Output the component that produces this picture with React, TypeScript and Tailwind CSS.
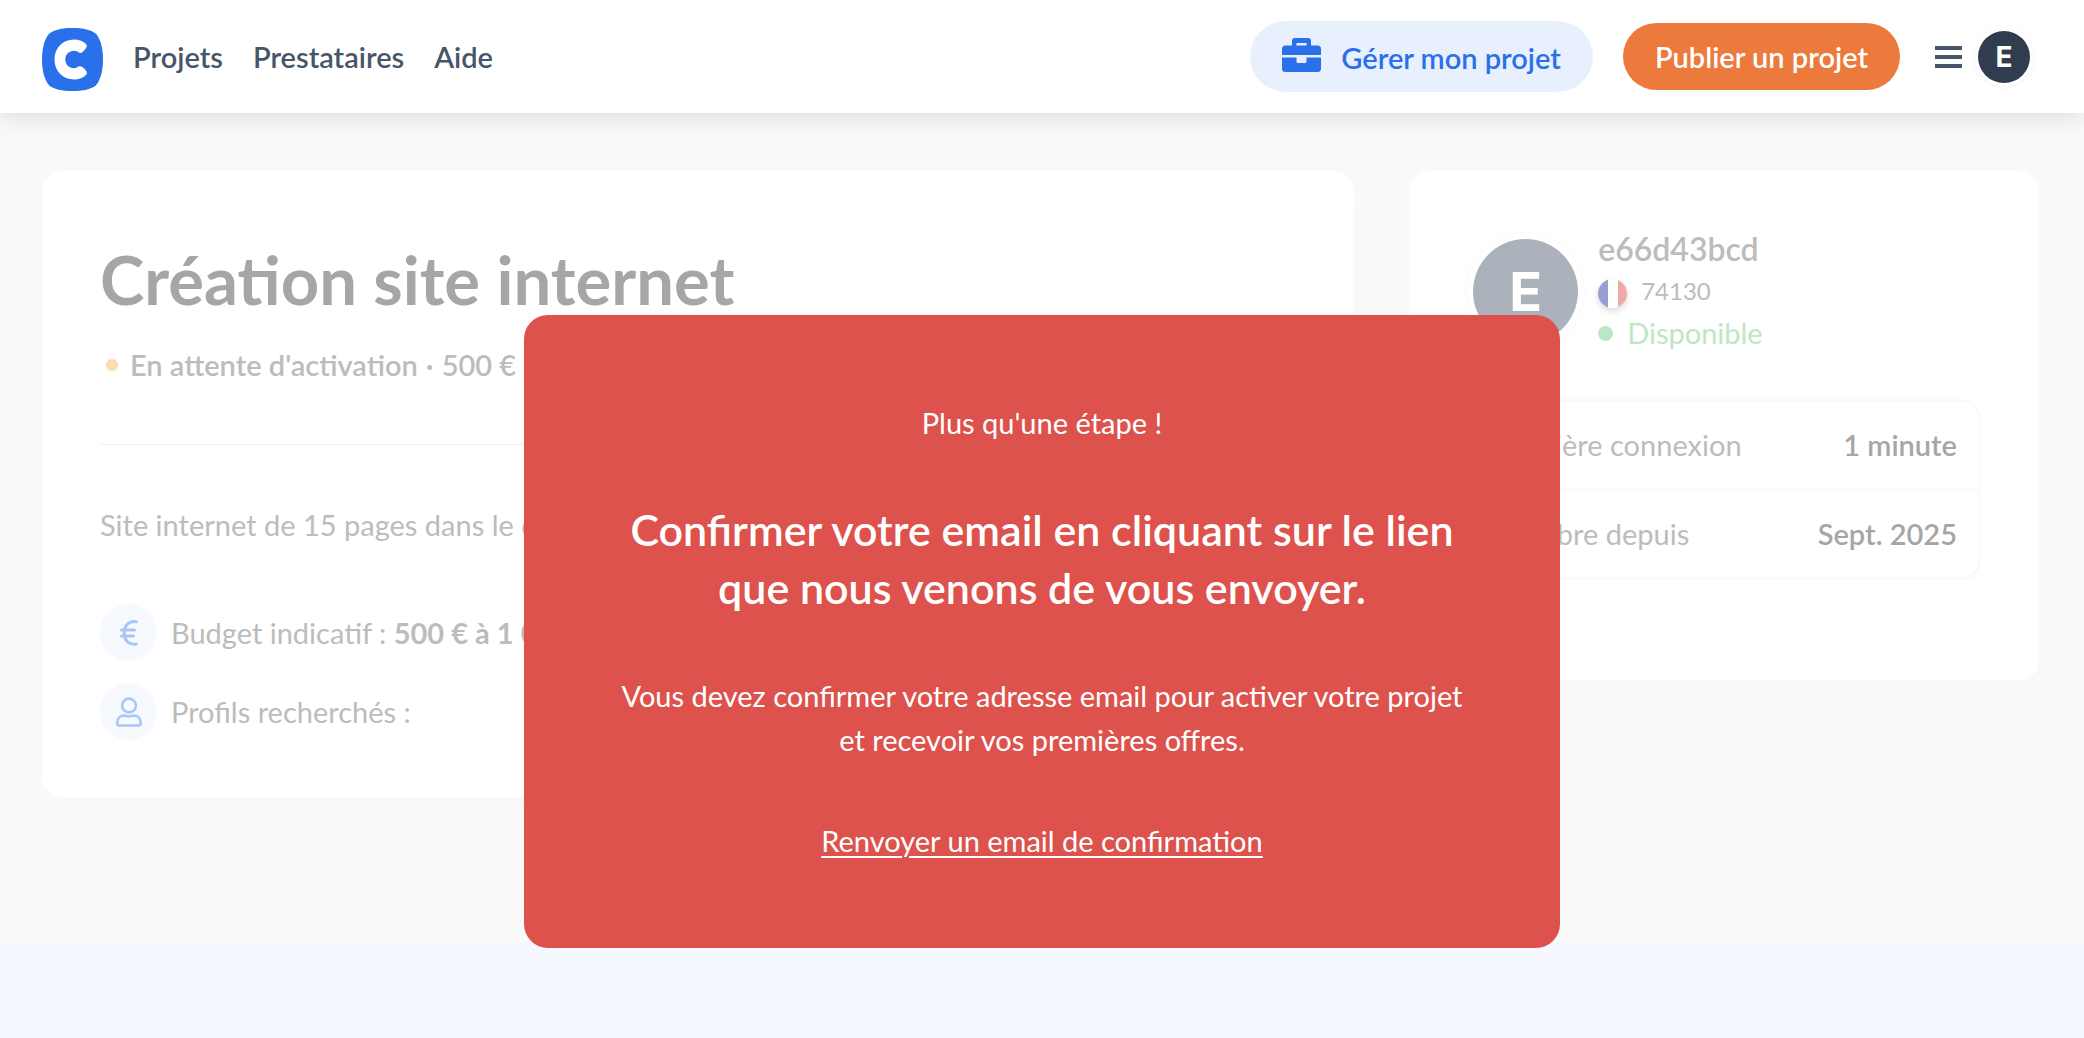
import React from "react";

const navLinks = ["Projets", "Prestataires", "Aide"];

function Logo() {
  return (
    <svg viewBox="0 0 61 63" className="h-[63px] w-[61px]" aria-hidden="true">
      <path
        d="M30.500 0C41 0 49.500 1.800 54 5.800C58.800 11.500 61 21 61 31.500C61 42 58.800 51.500 54 57.200C49.500 61.200 41 63 30.500 63C20 63 11.500 61.200 7 57.200C2.200 51.500 0 42 0 31.500C0 21 2.200 11.500 7 5.800C11.500 1.800 20 0 30.500 0Z"
        fill="#2970ea"
      />
      <path
        d="M32 11.500C37 11.500 41.500 13.400 44.300 16.200C45.500 17.600 44.600 19.500 43 21.500C41 24 39.200 25.600 37 24.600C35.500 23.500 34 22.800 32 22.800C27 22.800 23.300 26.500 23.300 31.500C23.300 36.500 27 40.200 32 40.200C34 40.200 35 39.300 36.500 38.500C38.500 37.500 40.500 38.800 42.500 40.700C44.600 42.800 45.600 45 44.300 46.800C41.500 49.800 37 51.500 32 51.500C20.700 51.500 12.500 43 12.500 31.500C12.500 20 20.700 11.500 32 11.500Z"
        fill="#fff"
      />
    </svg>
  );
}

function Briefcase() {
  return (
    <svg viewBox="0 0 39 34" className="mb-1 h-[34px] w-[39px]" fill="#2970ea" aria-hidden="true">
      <path
        fillRule="evenodd"
        d="M0 17V11a3.500 3.500 0 0 1 3.500-3.500H10V3a3 3 0 0 1 3-3H26a3 3 0 0 1 3 3V7.500H35.500A3.500 3.500 0 0 1 39 11V17ZM14.500 5V7.500H24.500V5Z"
      />
      <path d="M0 19.500H14.500V23.500a1.500 1.500 0 0 0 1.500 1.500H23a1.500 1.500 0 0 0 1.500-1.500V19.500H39V30.500A3.500 3.500 0 0 1 35.500 34H3.500A3.500 3.500 0 0 1 0 30.500Z" />
    </svg>
  );
}

function EuroIcon() {
  return (
    <svg viewBox="0 0 18 26" className="h-[26px] w-[18px]" fill="none" stroke="#a9c6f7" strokeWidth="3" strokeLinecap="round" aria-hidden="true">
      <path d="M16.300 1.700C9 .8 4.200 5.500 4.200 13S9 25.200 16.300 24.200M1.500 9.900H14.500M1.500 15.900H13.500" />
    </svg>
  );
}

function UserIcon() {
  return (
    <svg viewBox="0 0 26 30" className="h-[30px] w-[26px]" fill="none" stroke="#a9c6f7" strokeWidth="2.600" strokeLinejoin="round" aria-hidden="true">
      <circle cx="13" cy="8.500" r="6.900" />
      <path d="M1.300 26.500V25.500C1.300 21.500 4 18.600 8 18.600C9.800 18.600 10.800 19.400 13 19.400S16.200 18.600 18 18.600C22 18.600 24.700 21.500 24.700 25.500V26.500Q24.700 28.500 22.700 28.500H3.300Q1.300 28.500 1.300 26.500Z" />
    </svg>
  );
}

function Header() {
  return (
    <header className="relative z-10 flex h-[113px] items-center justify-between bg-white pr-[54px] pl-[42px] shadow-[0_0_28px_rgba(0,0,0,0.17)]">
      <div className="flex items-center gap-[30px]">
        <a href="#" aria-label="Accueil" className="pt-1.5">
          <Logo />
        </a>
        <nav className="flex gap-[30px] font-semibold text-[#475569]">
          {navLinks.map((label) => (
            <a key={label} href="#">
              {label}
            </a>
          ))}
        </nav>
      </div>
      <div className="flex items-center font-semibold">
        <button className="flex h-[71px] items-center gap-5 rounded-full bg-[#e8f0fd] px-8 text-[#2970ea]">
          <Briefcase />
          <span className="pt-0.5">Gérer mon projet</span>
        </button>
        <button className="ml-[30px] h-[67px] rounded-full bg-[#ed7a3d] px-8 text-white">Publier un projet</button>
        <button className="ml-[35px] flex items-center gap-4" aria-label="Menu du compte">
          <span className="flex w-[27px] flex-col gap-[5px]">
            <span className="h-1 bg-[#475569]" />
            <span className="h-1 bg-[#475569]" />
            <span className="h-1 bg-[#475569]" />
          </span>
          <span className="flex size-[52px] items-center justify-center rounded-full bg-[#303d4e] font-[Inter,sans-serif] text-[28px] font-bold text-white shadow-[0_0_0_3px_#fff,0_1px_6px_2px_rgba(0,0,0,0.08)]">
            E
          </span>
        </button>
      </div>
    </header>
  );
}

function ProjectCard() {
  return (
    <section className="rounded-[20px] bg-white px-[58px] pt-[58px] pb-[57px] shadow-[0_0_20px_rgba(0,0,0,0.02)]">
      <h1 className="text-[67px] leading-[100px] font-bold text-[#a6a6a6]">Création site internet</h1>
      <p className="mt-3.5 flex items-center font-semibold">
        <span className="mr-3 ml-1.5 size-3 rounded-full bg-[#fcdcb0]" />
        En attente d'activation <span className="mx-2">·</span> 500 € à 1 000 €
      </p>
      <hr className="mt-[57px] border-[#f3f3f3]" />
      <p className="mt-[58px]">Site internet de 15 pages dans le domaine</p>
      <ul className="mt-[57px] flex flex-col gap-[22px]">
        <li className="flex items-center gap-3.5">
          <span className="flex size-[57px] items-center justify-center rounded-full bg-[#f6f9fe]">
            <EuroIcon />
          </span>
          <span>
            Budget indicatif : <b>500 € à 1 000 €</b>
          </span>
        </li>
        <li className="flex items-center gap-3.5">
          <span className="flex size-[57px] items-center justify-center rounded-full bg-[#f6f9fe]">
            <UserIcon />
          </span>
          <span>Profils recherchés :</span>
        </li>
      </ul>
    </section>
  );
}

function ClientCard() {
  return (
    <aside className="rounded-[20px] bg-white px-[58px] pt-14 pb-[100px] shadow-[0_0_20px_rgba(0,0,0,0.02)]">
      <div className="flex gap-5 pl-1.5">
        <div className="mt-3 flex size-[105px] shrink-0 items-center justify-center rounded-full bg-[#abb2bb] font-[Inter,sans-serif] text-[54px] font-bold text-white shadow-[0_0_0_5px_#fff,0_1px_8px_5px_rgba(0,0,0,0.03)]">
          E
        </div>
        <div>
          <p className="text-[32px] font-semibold">e66d43bcd</p>
          <p className="flex items-center gap-3.5 text-2xl leading-[40px]">
            <span className="mt-1 flex size-[29px] overflow-hidden rounded-full shadow-[0_3px_6px_rgba(0,0,0,0.15)]">
              <span className="flex-1 bg-[#9a9fd3]" />
              <span className="flex-1 bg-white" />
              <span className="flex-1 bg-[#efa9a6]" />
            </span>
            74130
          </p>
          <p className="flex items-center gap-3.5 text-[#bce7c5]">
            <span className="size-[15px] rounded-full bg-[#bce7c5]" />
            Disponible
          </p>
        </div>
      </div>
      <dl className="mt-11 divide-y-3 divide-[#fafafa] rounded-[20px] border-3 border-[#fafafa]">
        <div className="flex h-[89px] items-center justify-between px-[21px]">
          <dt>Dernière connexion</dt>
          <dd className="font-semibold text-[#a6a6a6]">1 minute</dd>
        </div>
        <div className="flex h-[86px] items-center justify-between px-[21px]">
          <dt>Membre depuis</dt>
          <dd className="font-semibold text-[#a6a6a6]">Sept. 2025</dd>
        </div>
      </dl>
    </aside>
  );
}

function ConfirmModal() {
  return (
    <div
      role="dialog"
      aria-modal="true"
      aria-labelledby="confirm-title"
      className="absolute inset-x-0 top-[315px] z-20 mx-auto flex w-full max-w-[1036px] flex-col items-center rounded-3xl bg-[#dd524c] px-20 pt-[86px] pb-[85px] text-center text-white"
    >
      <p>Plus qu'une étape !</p>
      <h2 id="confirm-title" className="mt-14 text-[43px] leading-[58px] font-semibold">
        Confirmer votre email en cliquant sur le lien
        <br />
        que nous venons de vous envoyer.
      </h2>
      <p className="mt-[57px]">
        Vous devez confirmer votre adresse email pour activer votre projet
        <br />
        et recevoir vos premières offres.
      </p>
      <a href="#" className="mt-[57px] underline decoration-2 underline-offset-4">
        Renvoyer un email de confirmation
      </a>
    </div>
  );
}

export default function App() {
  return (
    <div className="relative flex min-h-screen flex-col bg-[#fafafa] font-[Lato,sans-serif] text-[29px] leading-[44px] text-[#bcbcbc]">
      <Header />
      <main className="grid grid-cols-[25fr_12fr] items-start gap-[55px] pt-[58px] pr-[45px] pb-[145px] pl-[42px]">
        <ProjectCard />
        <ClientCard />
      </main>
      <footer className="flex-1 bg-[#f5f8fe]" />
      <ConfirmModal />
    </div>
  );
}
